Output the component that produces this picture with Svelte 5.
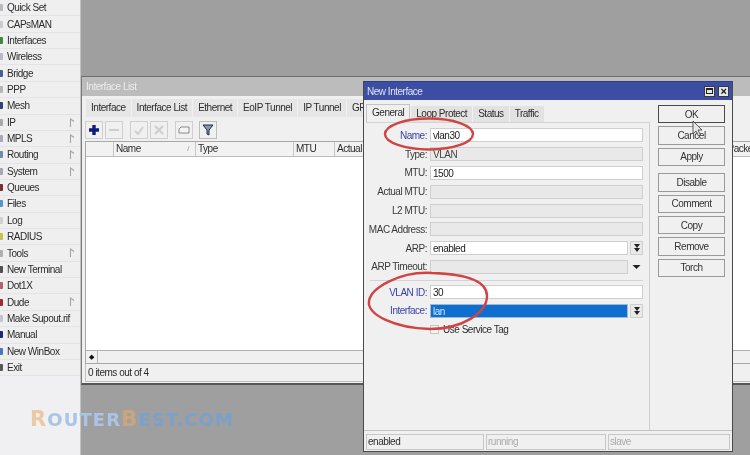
<script>
  const menu = [
    ['Quick Set', false, '#b9b9c0'], ['CAPsMAN', false, '#c9c9cf'], ['Interfaces', false, '#3d8a3d'], ['Wireless', false, '#b8b8c4'],
    ['Bridge', false, '#48608f'], ['PPP', false, '#b5b5bd'], ['Mesh', false, '#30407a'], ['IP', true, '#a8a8b0'],
    ['MPLS', true, '#a8a8b8'], ['Routing', true, '#6c8cab'], ['System', true, '#a8a8b0'], ['Queues', false, '#7a3030'],
    ['Files', false, '#5a93c8'], ['Log', false, '#d0d0d4'], ['RADIUS', false, '#c8c050'], ['Tools', true, '#b0b0b4'],
    ['New Terminal', false, '#505050'], ['Dot1X', false, '#b06070'], ['Dude', true, '#a02a3a'], ['Make Supout.rif', false, '#c4c4d0'],
    ['Manual', false, '#20287a'], ['New WinBox', false, '#4a78b8'], ['Exit', false, '#585858']
  ];
  const listTabs = ['Interface', 'Interface List', 'Ethernet', 'EoIP Tunnel', 'IP Tunnel', 'GRE Tunnel'];
  const cols = [['', 28], ['Name', 82], ['Type', 98], ['MTU', 41], ['Actual MTU', 60]];
  const dlgTabs = ['General', 'Loop Protect', 'Status', 'Traffic'];
  const btnGroups = [['OK', 'Cancel', 'Apply'], ['Disable', 'Comment', 'Copy', 'Remove', 'Torch']];
</script>

<div class="desk">
  <nav class="menu">
    {#each menu as [label, arrow, color]}
      <div class="item">
        <span class="ico" style="background:{color}"></span>
        <span class="lbl">{label}</span>
        {#if arrow}<svg class="flag" viewBox="0 0 6 9" width="6" height="9"><path d="M1.5 9V1L5 3.5" fill="none" stroke="#a5a5a8" stroke-width="1.1"/></svg>{/if}
      </div>
    {/each}
  </nav>

  <section class="list">
    <header class="list-title">Interface List</header>
    <div class="list-tabs">
      {#each listTabs as t}<span class="ltab">{t}</span>{/each}
    </div>
    <div class="tools">
      <button class="tb" aria-label="add"><svg viewBox="0 0 12 12" width="12" height="12"><path d="M6 1v10M1 6h10" stroke="#101a80" stroke-width="3.4"/></svg></button>
      <button class="tb" aria-label="remove"><svg viewBox="0 0 12 12" width="12" height="12"><path d="M1 6h10" stroke="#c6c6c6" stroke-width="1.6"/></svg></button>
      <button class="tb gap" aria-label="enable"><svg viewBox="0 0 12 12" width="12" height="12"><path d="M2 7l3 3 5-7" fill="none" stroke="#d0d0d0" stroke-width="2"/></svg></button>
      <button class="tb" aria-label="disable"><svg viewBox="0 0 12 12" width="12" height="12"><path d="M2 2l8 8M10 2l-8 8" stroke="#d0d0d0" stroke-width="2.4"/></svg></button>
      <button class="tb gap" aria-label="comment"><svg viewBox="0 0 12 12" width="12" height="12"><path d="M1 5l2-2h8v6H1z" fill="#f4f4f4" stroke="#8a8a8a"/></svg></button>
      <button class="tb gap filter" aria-label="filter"><svg viewBox="0 0 12 12" width="12" height="12"><path d="M1 1h10L7 6v5L5 10V6z" fill="#8a97a4" stroke="#222c3a"/></svg></button>
    </div>
    <div class="table">
      <div class="thead">
        {#each cols as [c, w], i}
          <span class="th" style="width:{w}px">{c}{#if i === 1}<i class="sort">/</i>{/if}</span>
        {/each}
        <span class="th spacer"></span>
        <span class="th packets">Tx Packets</span>
      </div>
      <div class="tbody"></div>
      <div class="hscroll"><span class="hbtn">◆</span></div>
    </div>
    <div class="list-status">0 items out of 4</div>
  </section>

  <section class="dlg">
    <header class="dlg-title">
      <span>New Interface</span>
      <span class="wbtns">
        <span class="wb"><i class="sq"></i></span>
        <span class="wb x">×</span>
      </span>
    </header>
    <div class="dlg-body">
      <div class="pane">
        <div class="dtabs">
          {#each dlgTabs as t, i}<span class="dtab" class:on={i === 0}>{t}</span>{/each}
        </div>
        <div class="form">
          <div class="row"><span class="l blue">Name:</span><div class="f w">vlan30</div></div>
          <div class="row"><span class="l">Type:</span><div class="f">VLAN</div></div>
          <div class="row"><span class="l">MTU:</span><div class="f w">1500</div></div>
          <div class="row"><span class="l">Actual MTU:</span><div class="f"></div></div>
          <div class="row"><span class="l">L2 MTU:</span><div class="f"></div></div>
          <div class="row"><span class="l">MAC Address:</span><div class="f"></div></div>
          <div class="row"><span class="l">ARP:</span><div class="f w">enabled</div><span class="dd boxed"><svg viewBox="0 0 8 8" width="8" height="8"><path d="M1 0h6L4 4zM1 4h6L4 8z" fill="#222"/></svg></span></div>
          <div class="row"><span class="l">ARP Timeout:</span><div class="f"></div><span class="dd"><svg viewBox="0 0 8 8" width="9" height="8"><path d="M0 2h8L4 6z" fill="#222"/></svg></span></div>
          <div class="sep"></div>
          <div class="row"><span class="l blue">VLAN ID:</span><div class="f w">30</div></div>
          <div class="row"><span class="l blue">Interface:</span><div class="f sel">lan</div><span class="dd boxed"><svg viewBox="0 0 8 8" width="8" height="8"><path d="M1 0h6L4 4zM1 4h6L4 8z" fill="#222"/></svg></span></div>
          <div class="row chk"><span class="l"></span><span class="box"></span><span class="chk-l">Use Service Tag</span></div>
        </div>
      </div>
      <div class="btns">
        {#each btnGroups as g}
          <div class="bgroup">
            {#each g as b}<button class="btn" class:def={b === 'OK'}>{b}</button>{/each}
          </div>
        {/each}
      </div>
    </div>
    <footer class="dlg-status">
      <span class="seg s1">enabled</span>
      <span class="seg s2 dim">running</span>
      <span class="seg s3 dim">slave</span>
    </footer>
  </section>

  <svg class="marks" viewBox="0 0 750 455" width="750" height="455">
    <ellipse cx="429" cy="134" rx="44" ry="15.5" fill="none" stroke="#d04444" stroke-width="2.4"/>
    <path d="M432 273C400 271 371 288 369 301C367 315 395 328 430 329C462 329 487 313 487 296C487 281 465 274 432 273Z" fill="none" stroke="#d04444" stroke-width="2.4"/>
    <path d="M693 121l0 13 3-3 2.5 5 2-1-2.5-5 4 0z" fill="#e8e8e8" stroke="#333" stroke-width=".8"/>
  </svg>

  <div class="wm"><b class="o">R</b><span>OUTER</span><b class="o dk">B</b><span class="dk2">EST.COM</span></div>
</div>

<style>
  :global(body) { margin: 0; }
  .desk {
    position: relative; width: 750px; height: 455px; overflow: hidden;
    background: #9f9f9f; font: 10px "Liberation Sans", Arial, sans-serif; letter-spacing: -.48px; color: #2c2c2c;
    filter: blur(.45px);
  }
  .menu {
    position: absolute; left: 0; top: 0; width: 81px; height: 455px;
    background: #f0f0f3; border-right: 1px solid #c4c4c4; box-sizing: border-box;
  }
  .item {
    height: 16.36px; display: flex; align-items: center; position: relative;
    box-sizing: border-box; border-bottom: 1px solid #e4e4e6; background: #efefef;
  }
  .ico { width: 3px; height: 7px; flex: none; border-radius: 0 1px 1px 0; }
  .lbl { margin-left: 4px; white-space: nowrap; }
  .flag { position: absolute; left: 69px; top: 3px; }

  .list {
    position: absolute; left: 81px; top: 76px; width: 690px; height: 309px; box-sizing: border-box;
    background: #f0f0f0; border-top: 1px solid #6e6e6e; border-left: 1px solid #7a7a7a; border-bottom: 2px solid #555;
    display: flex; flex-direction: column;
  }
  .list-title { height: 19px; flex: none; background: #bcbcbc; color: #ececec; padding: 0 4px; line-height: 19px; }
  .list-tabs { display: flex; height: 23px; flex: none; gap: 1px; padding: 1px 0 0 4px; box-sizing: border-box; }
  .ltab { background: #e6e6e6; padding: 3px 5px 0; white-space: nowrap; height: 18px; box-sizing: border-box; margin-top: 2px; }
  .tools { display: flex; height: 22px; flex: none; gap: 2px; padding: 0 0 0 3px; align-items: center; }
  .tb {
    width: 18px; height: 18px; padding: 0; display: flex; align-items: center; justify-content: center;
    background: #f0f0f0; border: 1px solid #cfcfcf; box-sizing: border-box;
  }
  .tb.gap { margin-left: 5px; }
  .tb.filter { margin-left: 4px; border-color: #bdbdbd; }
  .table { flex: 1; display: flex; flex-direction: column; margin: 0 3px 0 3px; border: 1px solid #a8a8a8; border-right: 0; min-height: 0; }
  .thead { height: 14px; display: flex; flex: none; background: #f2f2f2; border-bottom: 1px solid #bbb; }
  .th { border-right: 1px solid #c6c6c6; box-sizing: border-box; padding-left: 2px; line-height: 14px; position: relative; white-space: nowrap; overflow: hidden; flex: none; }
  .th.spacer { flex: 1; border: 0; }
  .th.packets { width: 56px; border-left: 1px solid #c6c6c6; }
  .sort { position: absolute; right: 6px; top: 0; font-style: normal; color: #999; font-size: 8px; }
  .tbody { flex: 1; background: #fff; }
  .hscroll { height: 12px; flex: none; background: #f0f0f0; border-top: 1px solid #b0b0b0; }
  .hbtn { display: block; width: 11px; height: 12px; font-size: 7px; line-height: 12px; text-align: center; border-right: 1px solid #b5b5b5; color: #111; }
  .list-status { height: 17px; flex: none; padding-left: 2px; line-height: 17px; margin: 0 3px 1px; background: #f0f0f0; border: 1px solid #c0c0c0; border-top: 0; }

  .dlg {
    position: absolute; left: 363px; top: 81px; width: 370px; height: 371px; box-sizing: border-box;
    background: #f0f0f0; border: 1px solid #4a4a4a; border-top: 1px solid #2f3f80;
    display: flex; flex-direction: column;
  }
  .dlg-title {
    height: 18px; flex: none; background: #3c4ea3; color: #dfe3f2; display: flex; justify-content: space-between; align-items: center;
    padding: 0 3px 0 3px;
  }
  .wbtns { display: flex; gap: 3px; }
  .wb { width: 11px; height: 11px; background: #e6e6e6; border: 1px solid #3a3a3a; box-sizing: border-box; display: flex; align-items: center; justify-content: center; color: #111; font-weight: bold; font-size: 11px; line-height: 9px; }
  .sq { width: 7px; height: 6px; border: 1px solid #222; border-top-width: 2px; box-sizing: border-box; display: block; }
  .dlg-body { flex: 1; display: flex; min-height: 0; }
  .pane { width: 286px; flex: none; display: flex; flex-direction: column; padding-left: 2px; box-sizing: border-box; }
  .dtabs { display: flex; height: 22px; flex: none; padding-top: 4px; box-sizing: border-box; align-items: flex-end; }
  .dtab { background: #e2e2e2; height: 16px; line-height: 16px; padding: 0 5px; margin-right: 1px; white-space: nowrap; box-sizing: border-box; }
  .dtab.on { background: #f0f0f0; height: 18px; border: 1px solid #c4c4c4; border-bottom: 0; line-height: 16px; padding: 0 5px; }
  .form { flex: 1; border-top: 1px solid #d4d4d4; border-right: 1px solid #cfcfcf; padding-top: 3px; box-sizing: border-box; }
  .row { display: flex; height: 18.8px; align-items: center; }
  .l { width: 61px; flex: none; text-align: right; white-space: nowrap; color: #3a3a3a; }
  .blue { color: #3a44a8; }
  .f {
    margin-left: 3px; flex: none; width: 213px; height: 14px; line-height: 13px; padding-left: 2px; box-sizing: border-box;
    border: 1px solid #cfcfcf; background: #e9e9e9; color: #444;
  }
  .f.w { background: #fff; color: #222; }
  .f:has(+ .dd) { width: 198px; }
  .f.sel { background: #0f6fd0; color: #cfe4fa; border-color: #9fb8d4; }
  .dd { width: 13px; height: 14px; margin-left: 2px; display: flex; align-items: center; justify-content: center; flex: none; }
  .dd.boxed { background: #e9e9e9; border: 1px solid #cfcfcf; box-sizing: border-box; }
  .sep { height: 1px; background: #d4d4d4; margin: 4px 6px 1.4px 4px; }
  .box { width: 9px; height: 9px; margin-left: 3px; border: 1px solid #c6c6c6; background: #f4f4f4; box-sizing: border-box; flex: none; }
  .chk-l { margin-left: 4px; }
  .btns { flex: 1; padding: 5px 0 0 8px; display: flex; flex-direction: column; gap: 7px; box-sizing: border-box; }
  .bgroup { display: flex; flex-direction: column; gap: 3px; }
  .btn {
    width: 67px; height: 18.4px; padding: 0; background: #f0f0f0; border: 1px solid #9a9a9a; box-sizing: border-box;
    font: inherit; letter-spacing: inherit; color: #333; outline: 0;
  }
  .btn.def { border-color: #4a4a4a; }
  .dlg-status { height: 21px; flex: none; display: flex; gap: 2px; padding: 3px 2px 1px; box-sizing: border-box; border-top: 1px solid #c4c4c4; }
  .seg { border: 1px solid #c8c8c8; padding-left: 1px; line-height: 14px; box-sizing: border-box; }
  .s1 { width: 118px; }
  .s2 { width: 120px; }
  .s3 { flex: 1; }
  .dim { color: #aaa; }
  .marks { position: absolute; left: 0; top: 0; pointer-events: none; }
  .wm {
    position: absolute; left: 30px; top: 408px; white-space: nowrap; font: bold 18px/22px "DejaVu Sans", sans-serif;
    letter-spacing: 1.1px; color: #a9c4e4;
  }
  .wm .o { color: #ecc8a6; font-size: 21px; }
  .wm .dk { color: #c9a67f; }
  .wm .dk2 { color: #7ba0cc; }
</style>
